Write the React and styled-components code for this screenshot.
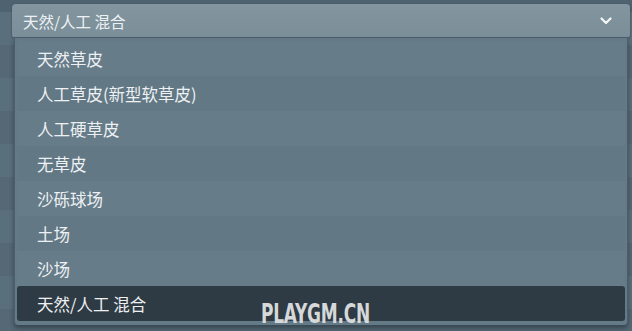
import styled, { createGlobalStyle } from "styled-components";

const GlobalStyle = createGlobalStyle`
  html, body {
    margin: 0;
    padding: 0;
  }
  body {
    width: 632px;
    height: 331px;
    overflow: hidden;
    font-family: "Noto Sans CJK SC", "Noto Sans", sans-serif;
    background-color: #586d7a;
    background-image: linear-gradient(#4e6270 0, #4e6270 12px, transparent 12px),
      repeating-linear-gradient(
        to bottom,
        #5a6f7c 12px,
        #5a6f7c 45px,
        #546875 45px,
        #546875 78px
      );
  }
`;

const Page = styled.div`
  position: relative;
  width: 632px;
  height: 331px;
  box-sizing: border-box;
  padding: 4px 2px 0 12px;
  display: flex;
  flex-direction: column;
`;

const Select = styled.div`
  box-sizing: border-box;
  height: 34px;
  background: linear-gradient(#83969f, #7a8e99);
  border-radius: 4px;
  box-shadow: 0 1px 2px rgba(30, 42, 50, 0.6);
  display: flex;
  align-items: center;
  justify-content: space-between;
  padding: 0 18px 0 11px;
  color: #eef1f3;
  font-size: 15.5px;
`;

const Chevron = styled.svg`
  width: 12px;
  height: 8px;
`;

const Menu = styled.div`
  box-sizing: border-box;
  margin: 0 2px 0 2px;
  background: #647a87;
  border-left: 1px solid #4b5e6a;
  border-right: 1px solid #4b5e6a;
  border-radius: 0 0 4px 4px;
  box-shadow: 0 3px 4px rgba(30, 42, 50, 0.55), 0 -1px 0 #4b5e6a;
  padding: 3px 2px 4px 2px;
  display: flex;
  flex-direction: column;
`;

const Item = styled.div`
  height: 35px;
  display: flex;
  align-items: center;
  padding-left: 20px;
  font-size: 16.5px;
  color: #eef1f3;
  background: ${(p) => (p.$selected ? "#2f3b44" : p.$alt ? "#667c89" : "#627885")};
  border-radius: ${(p) => (p.$selected ? "3px" : "0")};
`;

const Watermark = styled.div`
  position: absolute;
  left: 261px;
  top: 298px;
  font-family: "DejaVu Sans Condensed", "Liberation Sans", sans-serif;
  font-weight: bold;
  font-size: 27px;
  letter-spacing: -0.3px;
  color: #d6d8d9;
  transform: scaleX(0.7);
  transform-origin: left top;
`;

const options = [
  "天然草皮",
  "人工草皮(新型软草皮)",
  "人工硬草皮",
  "无草皮",
  "沙砾球场",
  "土场",
  "沙场",
  "天然/人工 混合",
];

export default function App() {
  const selected = "天然/人工 混合";
  return (
    <Page>
      <GlobalStyle />
      <Select>
        <span>{selected}</span>
        <Chevron viewBox="0 0 12 8">
          <path
            d="M1.5 1.5 L6 6 L10.5 1.5"
            fill="none"
            stroke="#f4f6f7"
            strokeWidth="2.2"
            strokeLinecap="round"
            strokeLinejoin="round"
          />
        </Chevron>
      </Select>
      <Menu>
        {options.map((o, i) => (
          <Item key={o} $alt={i % 2 === 0} $selected={o === selected}>
            {o}
          </Item>
        ))}
      </Menu>
      <Watermark>PLAYGM.CN</Watermark>
    </Page>
  );
}
